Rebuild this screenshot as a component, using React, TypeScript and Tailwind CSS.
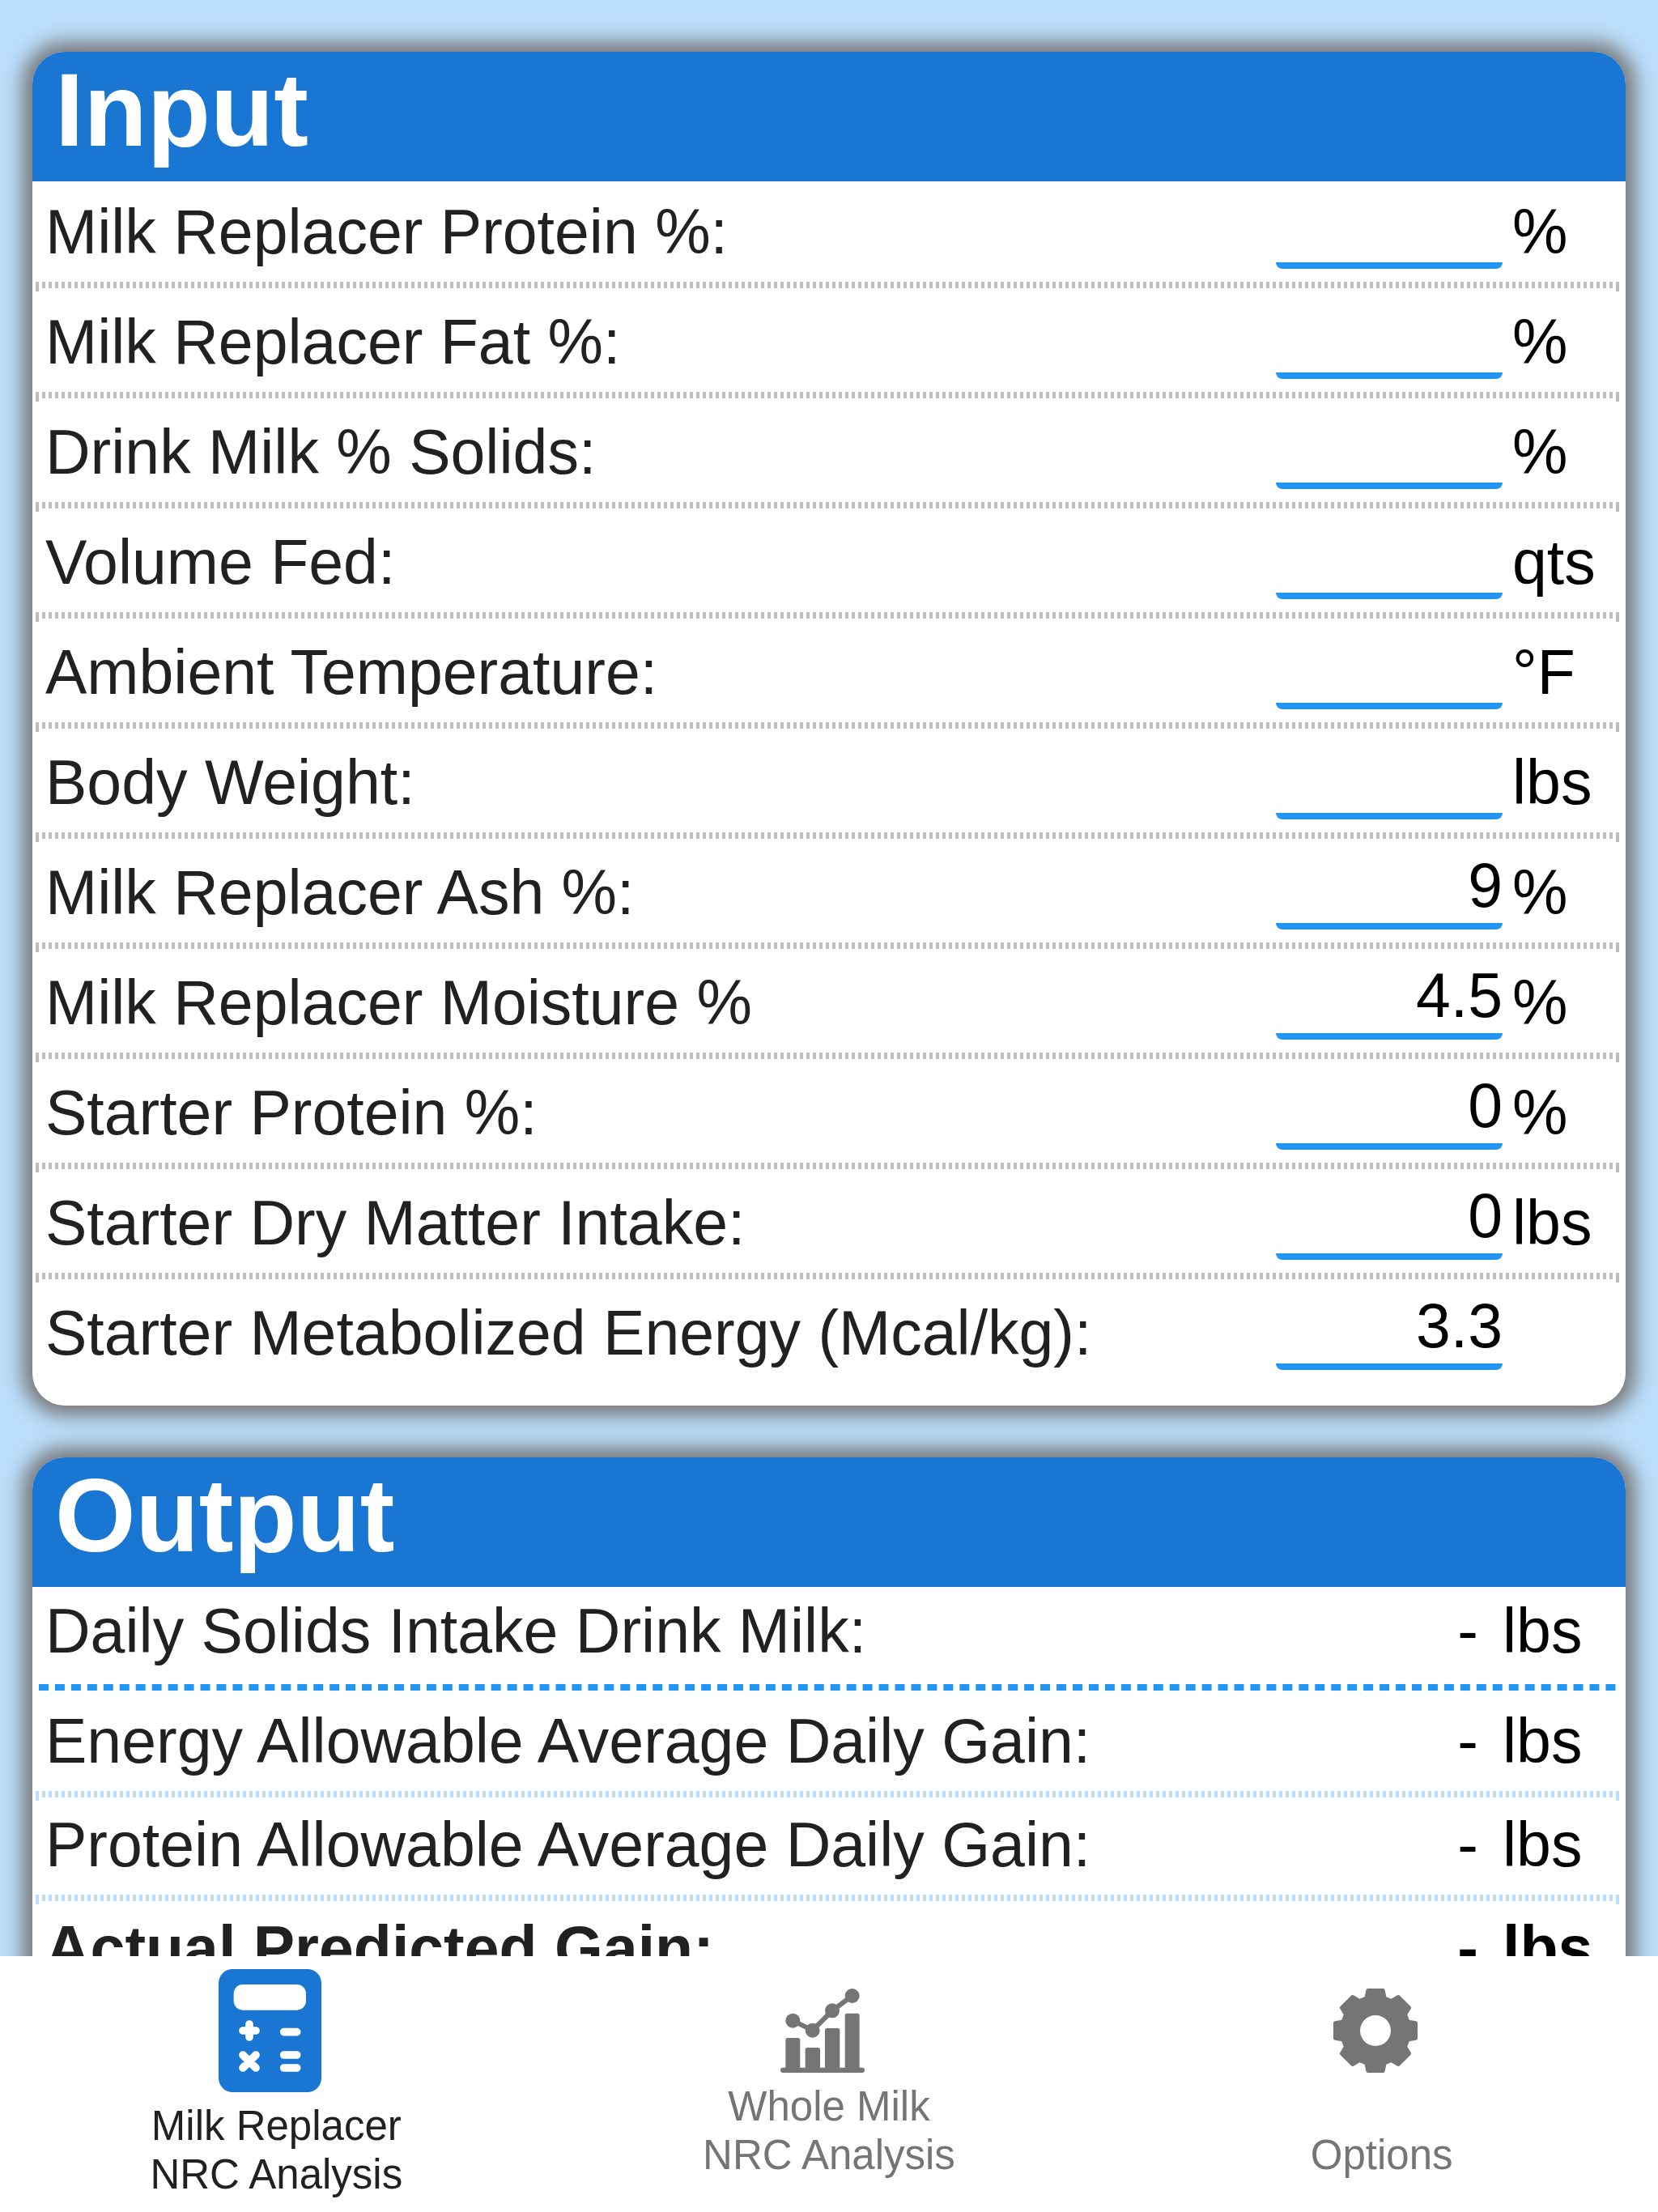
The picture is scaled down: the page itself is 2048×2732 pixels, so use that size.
import { useState } from "react";
import type { ReactNode } from "react";

interface InputField {
  id: string;
  label: string;
  unit: string;
  value: string;
}

interface OutputField {
  label: string;
  unit: string;
  bold?: boolean;
}

const inputFields: InputField[] = [
  { id: "mr-protein", label: "Milk Replacer Protein %:", unit: "%", value: "" },
  { id: "mr-fat", label: "Milk Replacer Fat %:", unit: "%", value: "" },
  { id: "solids", label: "Drink Milk % Solids:", unit: "%", value: "" },
  { id: "volume", label: "Volume Fed:", unit: "qts", value: "" },
  { id: "temperature", label: "Ambient Temperature:", unit: "°F", value: "" },
  { id: "weight", label: "Body Weight:", unit: "lbs", value: "" },
  { id: "mr-ash", label: "Milk Replacer Ash %:", unit: "%", value: "9" },
  { id: "mr-moisture", label: "Milk Replacer Moisture %", unit: "%", value: "4.5" },
  { id: "starter-protein", label: "Starter Protein %:", unit: "%", value: "0" },
  { id: "starter-dmi", label: "Starter Dry Matter Intake:", unit: "lbs", value: "0" },
  { id: "starter-me", label: "Starter Metabolized Energy (Mcal/kg):", unit: "", value: "3.3" },
];

const outputFields: OutputField[] = [
  { label: "Daily Solids Intake Drink Milk:", unit: "lbs" },
  { label: "Energy Allowable Average Daily Gain:", unit: "lbs" },
  { label: "Protein Allowable Average Daily Gain:", unit: "lbs" },
  { label: "Actual Predicted Gain:", unit: "lbs", bold: true },
];

function Card({ title, children }: { title: string; children: ReactNode }) {
  return (
    <section className="overflow-hidden rounded-[40px] bg-white shadow-[0_0_24px_12px_#757575]">
      <h2 className="bg-[#1976d2] px-7 pb-4 text-[128px] leading-[144px] font-bold text-white">
        {title}
      </h2>
      {children}
    </section>
  );
}

// Ticked rule, the first and last tick hang a little lower
function GrayDivider() {
  return (
    <div className="mr-2 ml-1 h-3 border-x-4 border-[#bdbdbd] bg-[linear-gradient(to_right,transparent_4px,#bdbdbd_4px)] bg-[length:8px_8px] bg-repeat-x" />
  );
}

function BlueDivider() {
  return (
    <div className="mr-2 ml-1 h-3 border-x-4 border-[#bbdefb] bg-[linear-gradient(to_right,transparent_4px,#bbdefb_4px)] bg-[length:8px_8px] bg-repeat-x" />
  );
}

function DashedDivider() {
  return (
    <div className="mt-1 mr-3 mb-2 ml-2 h-2 bg-[linear-gradient(to_right,#2196f3_12px,transparent_12px)] bg-[length:calc((100%+8px)/98)_8px] bg-repeat-x" />
  );
}

function InputRow({ field }: { field: InputField }) {
  const [value, setValue] = useState(field.value);

  return (
    <div className="flex min-h-[124px] items-end pb-4 pl-4 leading-[92px]">
      <label htmlFor={field.id} className="flex-1 text-[#212121]">
        {field.label}
      </label>
      <input
        id={field.id}
        type="text"
        inputMode="decimal"
        value={value}
        onChange={(e) => setValue(e.target.value)}
        className="h-[102px] w-[280px] rounded-lg border-b-8 border-[#2196f3] text-right leading-[86px] text-black outline-none"
      />
      <span className="w-[152px] pl-3 text-black">{field.unit}</span>
    </div>
  );
}

function OutputRow({ field }: { field: OutputField }) {
  return (
    <div
      className={`flex justify-between gap-[30px] pr-4 pb-2 pl-4 leading-[108px] ${
        field.bold ? "font-bold" : ""
      }`}
    >
      <span className="flex-1 text-[#212121]">{field.label}</span>
      <span className="text-black">-</span>
      <span className="w-[136px] text-black">{field.unit}</span>
    </div>
  );
}

function CalculatorIcon() {
  return (
    <svg className="mr-4 h-[152px] w-[127px]" viewBox="0 0 381 456" fill="none">
      <rect width="381" height="456" rx="52" fill="#1976d2" />
      <rect x="56" y="57" width="268" height="95" rx="34" fill="white" />
      <path
        d="M90 228H138M114 204V252M242 233H290M90 318L138 366M138 318L90 366M242 318H290M242 366H290"
        stroke="white"
        strokeWidth="29"
        strokeLinecap="round"
      />
    </svg>
  );
}

function ChartIcon() {
  return (
    <svg className="mr-4 size-[104px]" viewBox="0 0 312 312" fill="currentColor">
      <rect y="293" width="312" height="19" rx="9" />
      <path d="M19 300V191Q19 183 27 183H65Q73 183 73 191V300Z" />
      <path d="M92 300V227Q92 219 100 219H139Q147 219 147 227V300Z" />
      <path d="M165 300V155Q165 147 173 147H212Q220 147 220 155V300Z" />
      <path d="M239 300V100Q239 92 247 92H285Q293 92 293 100V300Z" />
      <path d="M46 119L119 155L192 82L266 27" fill="none" stroke="currentColor" strokeWidth="18" />
      <circle cx="46" cy="119" r="27" />
      <circle cx="119" cy="155" r="27" />
      <circle cx="192" cy="82" r="27" />
      <circle cx="266" cy="27" r="27" />
    </svg>
  );
}

function GearIcon() {
  return (
    <svg className="mr-4 size-[104px]" viewBox="0 0 312 312" fill="currentColor">
      <path
        fillRule="evenodd"
        d="M127 0H185Q190 0 191 6L196 31L215 38L237 25Q242 22 246 26L286 66Q290 70 287 75L274 97L281 116L306 121Q312 122 312 127V185Q312 190 306 191L281 196L274 215L287 237Q290 242 286 246L246 286Q242 290 237 287L215 274L196 281L191 306Q190 312 185 312H127Q122 312 121 306L116 281L97 274L75 287Q70 290 66 286L26 246Q22 242 25 237L38 215L31 196L6 191Q0 190 0 185V127Q0 122 6 121L31 116L38 97L25 75Q22 70 26 66L66 26Q70 22 75 25L97 38L116 31L121 6Q122 0 127 0ZM156 99A57 57 0 1 0 156 213A57 57 0 1 0 156 99Z"
      />
    </svg>
  );
}

function TabButton({
  active,
  icon,
  children,
}: {
  active?: boolean;
  icon: ReactNode;
  children: ReactNode;
}) {
  return (
    <button
      type="button"
      className={`flex flex-col items-center gap-3 ${
        active ? "pt-4 text-[#212121]" : "pt-10 text-[#757575]"
      }`}
    >
      {icon}
      <span className="flex min-h-[120px] items-end text-center">
        <span>{children}</span>
      </span>
    </button>
  );
}

export default function App() {
  return (
    <div className="flex h-screen flex-col bg-[#bbdefb] font-['Arial','Liberation_Sans',sans-serif] text-[77px]">
      <main className="flex min-h-0 flex-1 flex-col gap-16 overflow-hidden px-10 pt-16">
        <div className="shrink-0">
          <Card title="Input">
            <div className="pb-7">
              {inputFields.map((field, i) => (
                <div key={field.id}>
                  {i > 0 && <GrayDivider />}
                  <InputRow field={field} />
                </div>
              ))}
            </div>
          </Card>
        </div>
        <div className="shrink-0">
          <Card title="Output">
            {outputFields.map((field, i) => (
              <div key={field.label}>
                {i === 1 && <DashedDivider />}
                {i > 1 && <BlueDivider />}
                <OutputRow field={field} />
              </div>
            ))}
          </Card>
        </div>
      </main>

      <nav className="grid shrink-0 grid-cols-3 items-start bg-white pb-4 text-[51px] leading-[60px]">
        <TabButton active icon={<CalculatorIcon />}>
          Milk Replacer
          <br />
          NRC Analysis
        </TabButton>
        <TabButton icon={<ChartIcon />}>
          Whole Milk
          <br />
          NRC Analysis
        </TabButton>
        <TabButton icon={<GearIcon />}>Options</TabButton>
      </nav>
    </div>
  );
}
